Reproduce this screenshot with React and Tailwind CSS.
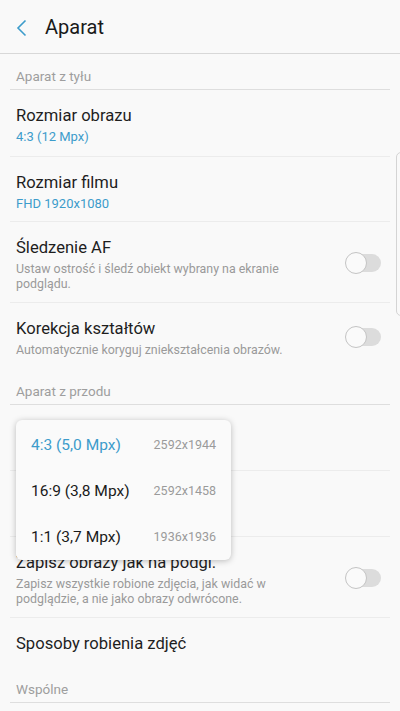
import React from 'react';

const font = { fontFamily: 'Roboto, "Noto Sans", sans-serif' };

function Toggle() {
    return (
        <div className="relative w-[36px] h-[22px] shrink-0">
            <div className="absolute left-[2px] right-0 top-[2px] h-[18px] rounded-full bg-[#dcdcdc]" />
            <div className="absolute left-0 top-0 w-[22px] h-[22px] rounded-full bg-[#fafafa] border border-[#c4c4c4]" />
        </div>
    );
}

function SectionHeader({ title }) {
    return (
        <div className="px-[10px]">
            <div className="h-[36px] flex items-end pb-[4px] border-b border-[#dedede]">
                <span className="px-[6px] text-[13.5px] leading-[18px] text-[#9e9e9e]">{title}</span>
            </div>
        </div>
    );
}

function Row({ title, value, desc, toggle, last, h }) {
    return (
        <div className="px-[10px]">
            <div className={`flex items-start pl-[6px] pr-[9px] pt-[15px] ${h} ${last ? '' : 'border-b border-[#ececec]'}`}>
                <div className="flex-1 min-w-0">
                    {title && <div className="text-[16.6px] leading-[22px] text-[#1e1e1e]">{title}</div>}
                    {value && <div className="mt-[2px] text-[13px] leading-[16px] text-[#3d9ccb]">{value}</div>}
                    {desc && <div className="mt-[2px] max-w-[295px] text-[12.4px] leading-[15px] text-[#9a9a9a]">{desc}</div>}
                </div>
                {toggle && <div className={toggle}><Toggle /></div>}
            </div>
        </div>
    );
}

export default function App() {
    return (
        <div className="relative w-[400px] h-[711px] overflow-hidden bg-[#f9f9f9]" style={font}>
            {/* Header */}
            <div className="h-[54px] flex items-center border-b border-[#d8d8d8]">
                <svg className="ml-[16px] mt-[2px]" width="12" height="18" viewBox="0 0 12 18" fill="none">
                    <path d="M9.5 1.5 L2 9 L9.5 16.5" stroke="#3d9ccb" strokeWidth="1.6" />
                </svg>
                <span className="ml-[17px] text-[20px] text-[#1a1a1a]">Aparat</span>
            </div>

            <SectionHeader title="Aparat z tyłu" />
            <Row title="Rozmiar obrazu" value="4:3 (12 Mpx)" h="h-[67px]" />
            <Row title="Rozmiar filmu" value="FHD 1920x1080" h="h-[65px]" />
            <Row title="Śledzenie AF" desc="Ustaw ostrość i śledź obiekt wybrany na ekranie podglądu." toggle="mt-[15px]" h="h-[81px]" />
            <Row title="Korekcja kształtów" desc="Automatycznie koryguj zniekształcenia obrazów." toggle="mt-[8px]" last h="h-[66px]" />

            <SectionHeader title="Aparat z przodu" />
            {/* rows hidden under the open menu */}
            <Row h="h-[66px]" />
            <Row h="h-[66px]" />
            <Row title="Zapisz obrazy jak na podgl." desc="Zapisz wszystkie robione zdjęcia, jak widać w podglądzie, a nie jako obrazy odwrócone." toggle="mt-[15px]" h="h-[81px]" />
            <Row title="Sposoby robienia zdjęć" last h="h-[49px]" />

            <SectionHeader title="Wspólne" />

            {/* Edge scroll handle */}
            <div className="absolute right-[-6px] top-[152px] w-[10px] h-[164px] rounded-[5px] border border-[#d4d4d4] bg-[#f9f9f9]" />

            {/* Dropdown popup */}
            <div className="absolute left-[16px] top-[420px] w-[215px] h-[140px] rounded-[6px] bg-[#fafafa] shadow-[0_1px_6px_rgba(0,0,0,0.25)] flex flex-col pt-[3px] px-[15px]">
                {[
                    ['4:3 (5,0 Mpx)', '2592x1944', true],
                    ['16:9 (3,8 Mpx)', '2592x1458', false],
                    ['1:1 (3,7 Mpx)', '1936x1936', false],
                ].map(([label, res, active]) => (
                    <div key={label} className="h-[47px] flex items-center justify-between">
                        <span className={`text-[15.5px] ${active ? 'text-[#3d9ccb]' : 'text-[#1a1a1a]'}`}>{label}</span>
                        <span className="text-[12.5px] text-[#9a9a9a]">{res}</span>
                    </div>
                ))}
            </div>
        </div>
    );
}
